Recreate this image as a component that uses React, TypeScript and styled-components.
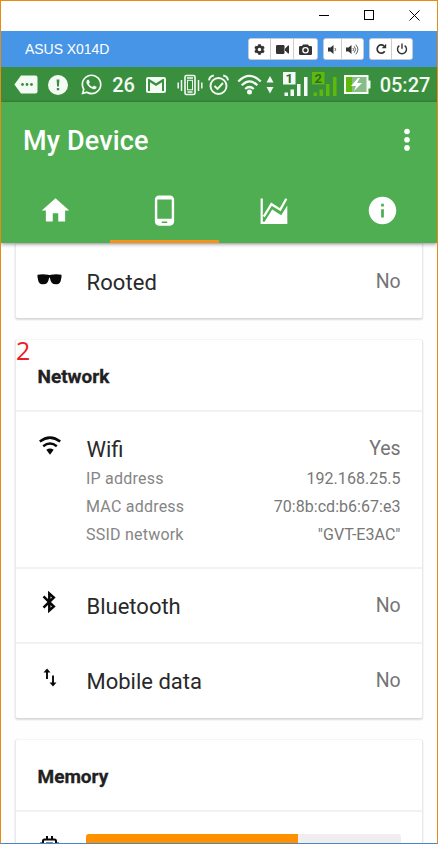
import React from 'react';
import styled, { createGlobalStyle, css } from 'styled-components';
import { MdHome, MdPhoneAndroid, MdInfo } from 'react-icons/md';
import { FaCog, FaWhatsapp } from 'react-icons/fa';

const Global = createGlobalStyle`
  * { box-sizing: border-box; }
  body { margin: 0; background: #fff; overflow: hidden; }
  svg { display: block; flex: none; }
`;

const Window = styled.div`
  width: 438px;
  height: 844px;
  display: flex;
  flex-direction: column;
  overflow: hidden;
  background: #fefefe;
  border: 1px solid #e98b12;
  border-bottom-color: #4a86c5;
  font-family: Roboto, sans-serif;
`;

const TitleBar = styled.div`
  height: 30px;
  flex: none;
  background: #fff;
  display: flex;
  justify-content: flex-end;
  align-items: center;
  gap: 35px;
  padding: 0 17.5px 2px 0;
`;

const ToolBar = styled.div`
  height: 36px;
  flex: none;
  background: #4795e6;
  display: flex;
  align-items: center;
  padding: 0 24px;
`;

const ModelName = styled.span`
  font: 14px 'Liberation Sans', sans-serif;
  letter-spacing: -0.05px;
  color: #fff;
  margin-right: auto;
`;

const ButtonGroup = styled.div`
  display: flex;
  height: 22px;
  margin-left: 5px;
  border: 1px solid #c4ccd4;
  border-radius: 3px;
  background: #fff;
  overflow: hidden;
`;

const ToolButton = styled.button<{ $w: number }>`
  width: ${p => p.$w}px;
  padding: 0;
  border: 0;
  background: #fff;
  color: #333;
  display: flex;
  align-items: center;
  justify-content: center;
  & + & { border-left: 1px solid #ccc; }
`;

const StatusBar = styled.div`
  height: 35px;
  flex: none;
  background: #3a8f3e;
  color: #f4faf4;
  display: flex;
  align-items: center;
`;

const Slot = styled.div<{ $gap: number; $w: number }>`
  width: ${p => p.$w}px;
  margin-left: ${p => p.$gap}px;
  display: flex;
  justify-content: center;
  flex: none;
`;

const StatusText = styled.span`
  font-size: 20px;
  font-weight: 500;
  line-height: 24px;
  white-space: nowrap;
`;

const Header = styled.header`
  height: 141px;
  flex: none;
  background: #4fae52;
  color: #fff;
  display: flex;
  flex-direction: column;
  box-shadow: 0 1px 4px rgba(0, 0, 0, 0.45);
  z-index: 1;
`;

const AppBar = styled.div`
  height: 76px;
  display: flex;
  align-items: center;
  justify-content: space-between;
  padding: 0 27px 0 22px;
`;

const AppTitle = styled.h1`
  margin: 0;
  padding-top: 1px;
  font-size: 27px;
  font-weight: 500;
  line-height: 32px;
  letter-spacing: 0.15px;
`;

const Tabs = styled.nav`
  flex: 1;
  display: grid;
  grid-template-columns: repeat(4, 109px);
`;

const Tab = styled.div<{ $active?: boolean }>`
  display: flex;
  align-items: center;
  justify-content: center;
  padding-top: 3px;
  border-bottom: 3px solid ${p => (p.$active ? '#f3931b' : 'transparent')};
`;

const Content = styled.main`
  flex: 1;
  min-height: 0;
  overflow: hidden;
  padding: 0 14px;
  display: flex;
  flex-direction: column;
  gap: 20px;
`;

const Card = styled.section<{ $cut?: boolean }>`
  position: relative;
  flex: none;
  background: #fff;
  border-radius: ${p => (p.$cut ? '0 0 3px 3px' : '3px')};
  border: 1px solid #e9e9eb;
  border-top-color: #f5f5f5;
  border-bottom-color: #d9d9db;
  box-shadow: 0 1px 2px rgba(0, 0, 0, 0.14);
`;

const CardTitle = styled.h2`
  margin: 0;
  height: 70px;
  padding: 2px 0 0 21.5px;
  display: flex;
  align-items: center;
  font-size: 19px;
  font-weight: 700;
  -webkit-text-stroke: 0.3px #212121;
  color: #212121;
`;

const Row = styled.div<{ $h: number; $plain?: boolean }>`
  height: ${p => p.$h}px;
  display: grid;
  grid-template-columns: 70px 1fr;
  padding-right: 21.5px;
  ${p => !p.$plain && css`border-top: 2px solid #f2f2f2;`}
`;

const IconCell = styled.div<{ $top: number }>`
  padding-top: ${p => p.$top}px;
  display: flex;
  justify-content: center;
  align-items: flex-start;
  width: 67px;
  color: #080808;
`;

const Details = styled.div<{ $top: number }>`
  padding-top: ${p => p.$top}px;
`;

const Line = styled.div`
  display: flex;
  justify-content: space-between;
  height: 30px;
  line-height: 32px;
  color: #757575;
  font-size: 19.5px;
  letter-spacing: -0.1px;
`;

const Name = styled.span<{ $track?: number }>`
  font-size: 22px;
  color: #292929;
  letter-spacing: ${p => p.$track ?? 0}px;
  padding: 1px 0 0 0.5px;
`;

const SubLines = styled.div`
  padding-top: 2px;
`;

const SubLine = styled(Line)`
  height: 28px;
  line-height: 28px;
  font-size: 16px;
  color: #858585;
  letter-spacing: 0.22px;
  & > span + span { color: #777; letter-spacing: 0.03px; }
`;

const Marker = styled.span`
  position: absolute;
  left: 0;
  top: -6px;
  font: 25px/32px 'Open Sans', sans-serif;
  color: #ed1c24;
`;

const Track = styled.div`
  margin-top: 22px;
  width: 315px;
  height: 30px;
  border-radius: 3px;
  background: #efedf0;
  overflow: hidden;
`;

const Fill = styled.div`
  width: 212px;
  height: 100%;
  background: #ff9000;
`;

const Video = () => (
  <svg width="13" height="9" viewBox="0 0 13 9" fill="currentColor">
    <rect width="8.5" height="9" rx="1.2" /><path d="M9 3.7 12 .5h1v8h-1L9 5.3z" />
  </svg>
);
const Camera = () => (
  <svg width="13" height="11" viewBox="0 0 13 11" fill="currentColor" fillRule="evenodd">
    <path d="M1.3 2H3l1-1.6h5L10 2h1.7Q13 2 13 3.3v6.4q0 1.3-1.3 1.3H1.3Q0 11 0 9.7V3.3Q0 2 1.3 2zM6.5 3a3.3 3.3 0 1 0 0 6.6 3.3 3.3 0 0 0 0-6.6zm0 1.3a2 2 0 1 1 0 4 2 2 0 0 1 0-4z" />
  </svg>
);
const Volume = ({ loud }: { loud?: boolean }) => (
  <svg width={loud ? 13 : 9} height="11" viewBox={loud ? '0 0 13 11' : '0 0 9 11'} fill="none" stroke="currentColor" strokeWidth=".8">
    <path d="M0 3.500h2.500L5.500 1v9L2.500 7.500H0z" fill="currentColor" stroke="none" />
    <path d="M6.900 4q1.500 1.500 0 3" />
    {loud && <path d="M8.200 2.300q3 3.200 0 6.400M9.800.7q4.200 4.800 0 9.600" />}
  </svg>
);
const Reload = () => (
  <svg width="12" height="12" viewBox="0 0 12 12">
    <path d="M9.700 8.300A4.100 4.100 0 1 1 9 3" fill="none" stroke="currentColor" strokeWidth="1.700" />
    <path d="M11.200.7v4.500H6.700z" fill="currentColor" />
  </svg>
);
const Power = () => (
  <svg width="12" height="12" viewBox="0 0 12 12" fill="none" stroke="currentColor" strokeWidth="1.400">
    <path d="M3.300 2.600a4.500 4.500 0 1 0 5.400 0M6 .5v5.300" />
  </svg>
);

const MoreTag = () => (
  <svg width="24" height="19" viewBox="0 0 24 19">
    <path d="M7 .5h14.500q2 0 2 2v14q0 2-2 2H7L.4 9.500z" fill="currentColor" />
    <g fill="#3a8f3e"><circle cx="8.500" cy="9.500" r="1.400" /><circle cx="13" cy="9.500" r="1.400" /><circle cx="17.500" cy="9.500" r="1.400" /></g>
  </svg>
);
const Alert = () => (
  <svg width="20" height="20" viewBox="0 0 20 20">
    <circle cx="10" cy="10" r="10" fill="currentColor" />
    <path d="M8.600 4.500h2.800l-.5 7H9.100zM8.800 13h2.400v2.300H8.800z" fill="#3a8f3e" />
  </svg>
);
const Mail = () => (
  <svg width="20" height="16" viewBox="2 4 20 16" fill="currentColor">
    <path fillRule="evenodd" d="M20 18h-2V9.250L12 13 6 9.250V18H4V6h1.200l6.800 4.250L18.800 6H20zM20 4H4a2 2 0 0 0-2 2v12c0 1.100.9 2 2 2h16a2 2 0 0 0 2-2V6a2 2 0 0 0-2-2z" />
  </svg>
);
const Vibrate = () => (
  <svg width="26" height="22" viewBox="0 0 26 22" fill="none" stroke="currentColor">
    <rect x="8" y="1.500" width="10" height="19" rx="1.500" strokeWidth="1.600" />
    <path d="M10 4h6M10.500 18h5" strokeWidth="1.400" /><rect x="10.500" y="6.300" width="5" height="9.500" />
    <path d="M4.500 6v11M21.500 6v11M1.200 8.500v6M24.800 8.500v6" strokeWidth="1.500" />
  </svg>
);
const Alarm = () => (
  <svg width="21" height="22" viewBox="0 0 21 22" fill="none" stroke="currentColor" strokeWidth="1.900">
    <circle cx="10.500" cy="12" r="8" /><path d="m6.500 12 3 3 5.500-6M1 6.300Q1.500 2.300 5.800 1.500M20 6.300q-.5-4-4.800-4.800" />
  </svg>
);
const StatusWifi = () => (
  <svg width="25" height="21" viewBox="0 0 25 21" fill="none" stroke="currentColor" strokeWidth="2.300">
    <path d="M1.300 7.500Q12.500-3.800 23.700 7.500M4.700 11.300q7.800-7.800 15.600 0M8.200 15q4.300-4 8.600 0" />
    <circle cx="12.500" cy="18" r="2.500" fill="currentColor" stroke="none" />
  </svg>
);
const Traffic = () => (
  <svg width="8" height="18" viewBox="0 0 8 18" fill="currentColor"><path d="m4 0 3.500 6.500h-7zM4 17.500.5 11h7z" /></svg>
);
const Signal = ({ sim, color }: { sim: string; color: string }) => (
  <svg width="26" height="25" viewBox="0 0 26 25" fill={color}>
    <path d="M0 0h12.500v12.500H0zM1.500 20.500H5V24H1.500zM7.500 17.500H11V24H7.500zM14 12h3.500v12H14zM21 5h3.500v19H21z" />
    <text x="6.200" y="11" fontSize="13" fontWeight="700" fontFamily="Roboto" textAnchor="middle" fill="#286f2c">{sim}</text>
  </svg>
);
const Battery = () => (
  <svg width="27" height="19" viewBox="0 0 27 19">
    <rect x="1" y="1" width="22.500" height="17" fill="#88bd8a" stroke="#f4faf4" strokeWidth="2" />
    <path d="M24 5.500h2.500v8H24z" fill="#f4faf4" /><path d="M2 2h6v15H2z" fill="#5fb90a" />
    <path d="m14 3-7 8h5l-2 5 8-8h-5l3-5z" fill="#fff" />
  </svg>
);
const Dots = () => (
  <svg width="6" height="24" viewBox="0 0 6 24" fill="currentColor"><circle cx="3" cy="3.500" r="2.800" /><circle cx="3" cy="11.700" r="2.800" /><circle cx="3" cy="19.900" r="2.800" /></svg>
);
const Chart = () => (
  <svg width="28" height="26" viewBox="0 0 28 26">
    <path d="M1.700.5v24.300h25.600" fill="none" stroke="#fff" strokeWidth="2.200" />
    <path d="m5.500 22.300 6.700-10.800 9 5.700L27.300 7.500V25H4z" fill="#fff" />
    <path d="M3.800 18.700 11.400 6.200l8.800 5.500L26.300.7" fill="none" stroke="#fff" strokeWidth="2.300" />
  </svg>
);
const Glasses = () => (
  <svg width="25" height="11" viewBox="0 0 25 11">
    <path d="M.5.8Q6-.5 11 .8q1.500.6 3 0Q19-.5 24.500.8v2.400q-.3.700-.5 2.300-.5 4.500-4.500 4.800-5.500.5-6.300-5.300-.2-1.500-.7-1.500T11.800 5q-.8 5.800-6.300 5.300Q1.500 10 1 5.500.8 3.900.5 3.200z" fill="currentColor" />
  </svg>
);
const Wifi = () => (
  <svg width="22" height="19" viewBox="0 0 22 19" fill="none" stroke="currentColor" strokeWidth="2.500">
    <path d="M.8 5.600q10.200-8 20.400 0M4.200 10.200q6.800-5.400 13.600 0" />
    <path d="M7.300 13.800q3.700-2.600 7.400 0L11 18.800z" fill="currentColor" stroke="none" />
  </svg>
);
const Bluetooth = () => (
  <svg width="15" height="22" viewBox="0 0 15 22" fill="none" stroke="currentColor" strokeWidth="2.500">
    <path d="m1.500 5.300 10.300 10.200-4.500 4V2.500l4.500 4L1.500 16.700" />
  </svg>
);
const UpDown = () => (
  <svg width="14" height="19" viewBox="0 0 14 19" fill="none" stroke="currentColor" strokeWidth="1.900">
    <path d="M4 11V2.500M10 7.500V16" /><path d="M.5 4.400 4 .5l3.500 3.900zM6.500 14.600l3.500 3.900 3.500-3.900z" fill="currentColor" stroke="none" />
  </svg>
);
const Chip = () => (
  <svg width="19" height="19" viewBox="0 0 19 19" fill="none" stroke="currentColor" strokeWidth="2">
    <rect x="3" y="3.500" width="13" height="13" rx="1.500" /><rect x="7" y="7.500" width="5" height="5" />
    <path d="M7 0v3.500M12 0v3.500M7 16v3M12 16v3M0 7.500h3M0 12.500h3M16 7.500h3M16 12.500h3" />
  </svg>
);

export default function App() {
  return (
    <Window>
      <Global />
      <TitleBar>
        <svg width="10" height="10"><path d="M0 5.500h10" stroke="#000" /></svg>
        <svg width="10" height="10"><rect x=".5" y=".5" width="9" height="9" fill="none" stroke="#000" /></svg>
        <svg width="11" height="11"><path d="m.5.5 10 10m0-10-10 10" stroke="#000" /></svg>
      </TitleBar>
      <ToolBar>
        <ModelName>ASUS X014D</ModelName>
        <ButtonGroup>
          <ToolButton $w={21}><FaCog size={11} /></ToolButton>
          <ToolButton $w={23}><Video /></ToolButton>
          <ToolButton $w={24}><Camera /></ToolButton>
        </ButtonGroup>
        <ButtonGroup>
          <ToolButton $w={17}><Volume /></ToolButton>
          <ToolButton $w={22}><Volume loud /></ToolButton>
        </ButtonGroup>
        <ButtonGroup>
          <ToolButton $w={21}><Reload /></ToolButton>
          <ToolButton $w={21}><Power /></ToolButton>
        </ButtonGroup>
      </ToolBar>
      <StatusBar>
        <Slot $gap={13} $w={24}><MoreTag /></Slot>
        <Slot $gap={10} $w={20}><Alert /></Slot>
        <Slot $gap={12} $w={22}><FaWhatsapp size={23} /></Slot>
        <Slot $gap={10} $w={23}><StatusText>26</StatusText></Slot>
        <Slot $gap={11} $w={20}><Mail /></Slot>
        <Slot $gap={11} $w={26}><Vibrate /></Slot>
        <Slot $gap={5} $w={21}><Alarm /></Slot>
        <Slot $gap={8} $w={25}><StatusWifi /></Slot>
        <Slot $gap={4} $w={8}><Traffic /></Slot>
        <Slot $gap={9} $w={26}><Signal sim="1" color="#f4faf4" /></Slot>
        <Slot $gap={3} $w={26}><Signal sim="2" color="#5fb90a" /></Slot>
        <Slot $gap={6} $w={27}><Battery /></Slot>
        <Slot $gap={9} $w={50}><StatusText>05:27</StatusText></Slot>
      </StatusBar>
      <Header>
        <AppBar><AppTitle>My Device</AppTitle><Dots /></AppBar>
        <Tabs>
          <Tab><MdHome size={33} /></Tab>
          <Tab $active><MdPhoneAndroid size={33} /></Tab>
          <Tab><Chart /></Tab>
          <Tab><MdInfo size={33} /></Tab>
        </Tabs>
      </Header>
      <Content>
        <Card $cut>
          <Row $h={74} $plain>
            <IconCell $top={30}><Glasses /></IconCell>
            <Details $top={22}><Line><Name $track={0.1}>Rooted</Name><span>No</span></Line></Details>
          </Row>
        </Card>
        <Card>
          <Marker>2</Marker>
          <CardTitle>Network</CardTitle>
          <Row $h={157}>
            <IconCell $top={24}><Wifi /></IconCell>
            <Details $top={21}>
              <Line><Name>Wifi</Name><span>Yes</span></Line>
              <SubLines>
                <SubLine><span>IP address</span><span>192.168.25.5</span></SubLine>
                <SubLine><span>MAC address</span><span>70:8b:cd:b6:67:e3</span></SubLine>
                <SubLine><span>SSID network</span><span>"GVT-E3AC"</span></SubLine>
              </SubLines>
            </Details>
          </Row>
          <Row $h={75}>
            <IconCell $top={22}><Bluetooth /></IconCell>
            <Details $top={21}><Line><Name>Bluetooth</Name><span>No</span></Line></Details>
          </Row>
          <Row $h={76}>
            <IconCell $top={24}><UpDown /></IconCell>
            <Details $top={21}><Line><Name>Mobile data</Name><span>No</span></Line></Details>
          </Row>
        </Card>
        <Card>
          <CardTitle>Memory</CardTitle>
          <Row $h={80}>
            <IconCell $top={24}><Chip /></IconCell>
            <Details $top={0}><Track><Fill /></Track></Details>
          </Row>
        </Card>
      </Content>
    </Window>
  );
}
